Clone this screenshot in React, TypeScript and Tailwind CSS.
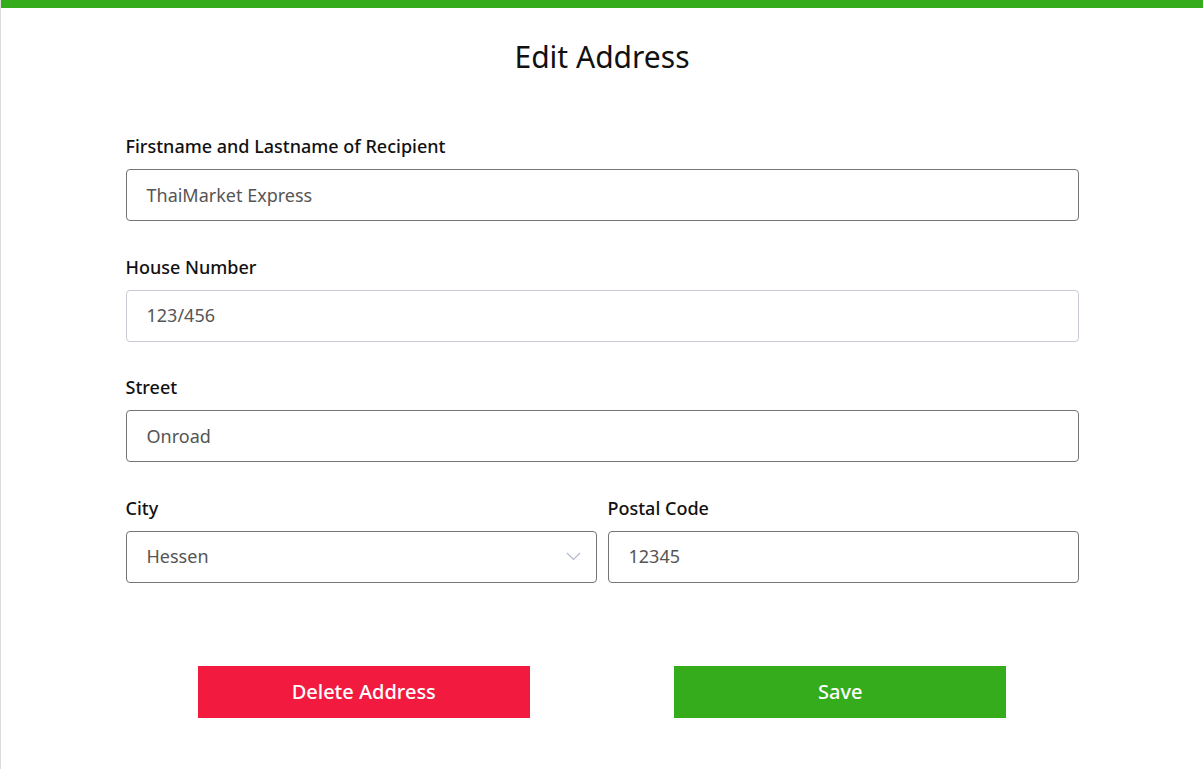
import React from "react";

const font = { fontFamily: '"Noto Sans", "Open Sans", sans-serif' };

function Field({ label, value, light }: { label: string; value: string; light?: boolean }) {
  return (
    <div className="flex flex-col">
      <label className="text-[18px] leading-6 font-medium text-[#111]">{label}</label>
      <div
        className={`mt-[11px] h-[52px] rounded-[4px] border flex items-center px-5 text-[18px] text-[#555] ${
          light ? "border-[#cbc8d6]" : "border-[#757575]"
        }`}
      >
        {value}
      </div>
    </div>
  );
}

export default function App() {
  return (
    <div className="min-h-[769px] w-full bg-white border-l border-[#dcdcdc]" style={font}>
      <div className="h-2 bg-[#35ac1c]" />
      <h1 className="pt-[31px] text-center text-[30px] leading-9 text-[#111]">Edit Address</h1>
      <div className="mx-auto w-[953px] mt-[59px] flex flex-col gap-[33.6px]">
        <Field label="Firstname and Lastname of Recipient" value="ThaiMarket Express" />
        <Field label="House Number" value="123/456" light />
        <Field label="Street" value="Onroad" />
        <div className="grid grid-cols-2 gap-[11px]">
          <div className="flex flex-col">
            <label className="text-[18px] leading-6 font-medium text-[#111]">City</label>
            <div className="mt-[11px] h-[52px] rounded-[4px] border border-[#757575] flex items-center justify-between pl-5 pr-[15px] text-[18px] text-[#555]">
              <span>Hessen</span>
              <svg width="15" height="9" viewBox="0 0 15 9" fill="none">
                <path d="M1 1l6.5 6.5L14 1" stroke="#b4b8cc" strokeWidth="1.2" />
              </svg>
            </div>
          </div>
          <Field label="Postal Code" value="12345" />
        </div>
      </div>
      <div className="mx-auto w-[953px] mt-[83px] flex justify-around">
        <button className="w-[332px] h-[52px] bg-[#f21b3f] text-white text-[20px] font-medium">
          Delete Address
        </button>
        <button className="w-[332px] h-[52px] bg-[#35ac1c] text-white text-[20px] font-medium">
          Save
        </button>
      </div>
    </div>
  );
}
